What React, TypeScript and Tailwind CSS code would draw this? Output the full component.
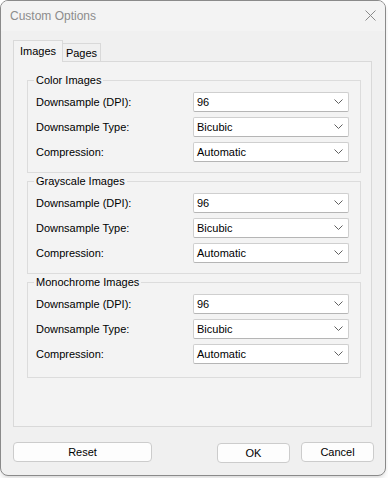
import React from 'react';

const groups = [
  { title: 'Color Images', pb: 'pb-[10px]' },
  { title: 'Grayscale Images', pb: 'pb-[10px]' },
  { title: 'Monochrome Images', pb: 'pb-[13px]' },
];

const rows = [
  { label: 'Downsample (DPI):', value: '96' },
  { label: 'Downsample Type:', value: 'Bicubic' },
  { label: 'Compression:', value: 'Automatic' },
];

function Chevron() {
  return (
    <svg width="9" height="6" viewBox="0 0 9 6" fill="none">
      <path d="M0.5 0.5 L4.5 4.5 L8.5 0.5" stroke="#606060" strokeWidth="1" />
    </svg>
  );
}

function Select({ value }: { value: string }) {
  return (
    <div className="w-[156px] h-[20px] flex items-center justify-between bg-white border border-[#cfcfcf] border-b-[#b5b5b5] rounded-[2px] pl-[3px] pr-[5px]">
      <span className="text-[11px] leading-none text-black">{value}</span>
      <Chevron />
    </div>
  );
}

function Group({ title, pb }: { title: string; pb: string }) {
  return (
    <fieldset className={`w-[334px] border border-[#dcdcdc] pl-[8px] pr-[11px] pt-[5px] ${pb}`}>
      <legend className="-ml-[2px] px-[2px] text-[11px] leading-[14px] text-black">{title}</legend>
      <div className="flex flex-col gap-[5px]">
        {rows.map((r) => (
          <div key={r.label} className="flex items-center justify-between">
            <span className="text-[11px] text-black">{r.label}</span>
            <Select value={r.value} />
          </div>
        ))}
      </div>
    </fieldset>
  );
}

export default function App() {
  return (
    <div className="w-[388px] h-[478px] bg-white" style={{ fontFamily: '"Liberation Sans", Arial, sans-serif' }}>
      <div className="w-[386px] h-[476px] bg-[#f0f0f0] border border-[#8a8a8a] rounded-[8px] overflow-hidden flex flex-col shadow-md">
        {/* title bar */}
        <div className="h-[30px] bg-[#f3f3f3] flex items-center justify-between pl-[9px] pr-[9px]">
          <span className="text-[12px] text-[#8c8c8c]">Custom Options</span>
          <svg width="11" height="11" viewBox="0 0 11 11" fill="none" className="mt-[-2px]">
            <path d="M0.5 0.5 L10.5 10.5 M10.5 0.5 L0.5 10.5" stroke="#8a8a8a" strokeWidth="1" />
          </svg>
        </div>

        {/* tabs */}
        <div className="pl-[12px] pt-[9px]">
          <div className="flex items-end h-[21px]">
            <div className="w-[50px] h-[22px] -mb-px relative z-10 bg-[#f3f3f3] border border-b-0 border-[#d9d9d9] flex items-center justify-center text-[11px] text-black">
              Images
            </div>
            <div className="w-[38px] h-[18px] border-t border-r border-[#d9d9d9] bg-[#f0f0f0] flex items-center justify-center text-[11px] text-black pt-[2px]">
              Pages
            </div>
          </div>
          <div className="w-[359px] h-[366px] border border-[#d9d9d9] bg-[#f3f3f3] pl-[13px] pt-[11px] flex flex-col gap-[1px]">
            {groups.map((g) => (
              <Group key={g.title} title={g.title} pb={g.pb} />
            ))}
          </div>
        </div>

        {/* buttons */}
        <div className="flex justify-between pl-[12px] pr-[11px] mt-[15px]">
          <button className="w-[139px] h-[20px] bg-[#fdfdfd] border border-[#cccccc] rounded-[4px] text-[11px] text-black">
            Reset
          </button>
          <div className="flex gap-[11px]">
            <button className="w-[73px] h-[20px] mt-px bg-[#fdfdfd] border border-[#cccccc] rounded-[4px] text-[11px] text-black">
              OK
            </button>
            <button className="w-[73px] h-[20px] bg-[#fdfdfd] border border-[#cccccc] rounded-[4px] text-[11px] text-black">
              Cancel
            </button>
          </div>
        </div>
      </div>
    </div>
  );
}
